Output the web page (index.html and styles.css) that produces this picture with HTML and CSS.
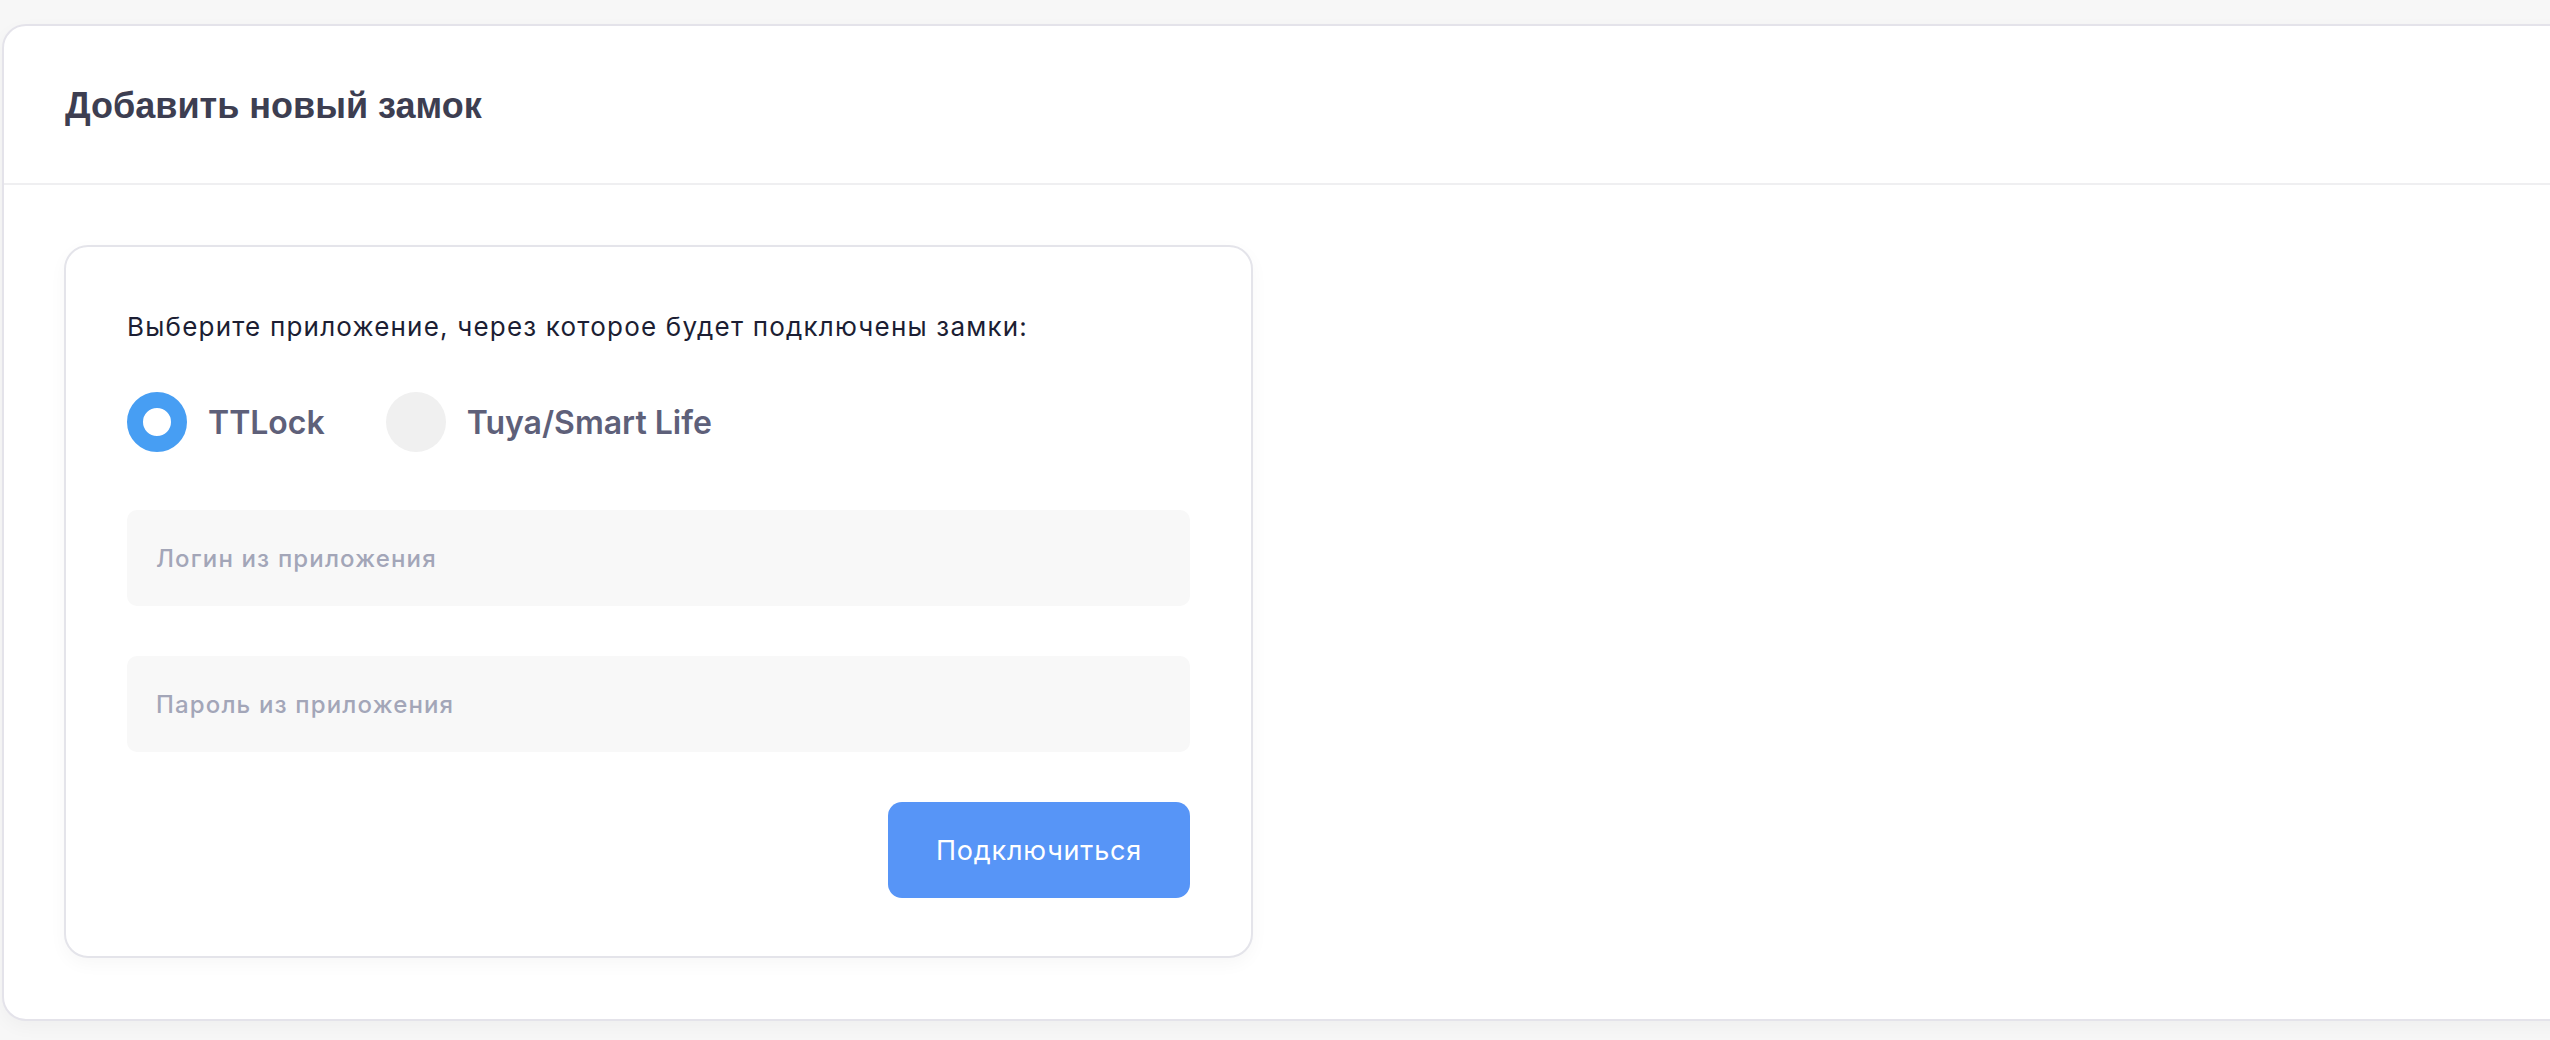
FILE: index.html
```html
<!DOCTYPE html>
<html lang="ru">
<head>
<meta charset="utf-8">
<title>Добавить новый замок</title>
<link rel="stylesheet" href="styles.css">
</head>
<body>
<div class="page">
  <section class="panel">
    <header class="panel-head">
      <h1 class="panel-title">Добавить новый замок</h1>
    </header>
    <div class="panel-body">
      <form class="connect-card">
        <p class="connect-label">Выберите приложение, через которое будет подключены замки:</p>
        <div class="radio-row">
          <label class="radio">
            <span class="radio-dot radio-dot--on"></span>
            <span class="radio-text">TTLock</span>
          </label>
          <label class="radio">
            <span class="radio-dot"></span>
            <span class="radio-text">Tuya/Smart Life</span>
          </label>
        </div>
        <input class="field field--first" type="text" placeholder="Логин из приложения">
        <input class="field" type="password" placeholder="Пароль из приложения">
        <div class="actions">
          <button class="btn-primary" type="button">Подключиться</button>
        </div>
      </form>
    </div>
  </section>
</div>
</body>
</html>
```

FILE: styles.css
```css
html, body {
  margin: 0;
  padding: 0;
  background: #f7f7f7;
  overflow: hidden;
}

body {
  font-family: Inter, "Noto Sans", "Liberation Sans", sans-serif;
  width: 2550px;
  height: 1040px;
}

.page {
  padding: 24px 0 0 2px;
}

.panel {
  margin-right: -40px;
  height: 997px;
  box-sizing: border-box;
  background: #ffffff;
  border: 2px solid #e4e3ea;
  border-radius: 24px;
  box-shadow: 0 6px 18px rgba(0, 0, 0, 0.035);
  display: flex;
  flex-direction: column;
}

.panel-head {
  height: 157px;
  border-bottom: 2px solid #efeff1;
  display: flex;
  align-items: center;
  padding: 0 61px;
}

.panel-title {
  margin: 0;
  font-family: "Liberation Sans", Arial, sans-serif;
  font-weight: 700;
  font-size: 36px;
  color: #3d3e51;
  position: relative;
  top: 1px;
}

.panel-body {
  padding: 60px 60px 0 60px;
}

.connect-card {
  width: 1189px;
  box-sizing: border-box;
  border: 2px solid #e4e4ea;
  border-radius: 24px;
  background: #ffffff;
  box-shadow: 0 6px 18px rgba(0, 0, 0, 0.035);
  padding: 60px 61px 58px 61px;
  display: flex;
  flex-direction: column;
  margin: 0;
}

.connect-label {
  margin: 0;
  font-size: 26px;
  line-height: 39px;
  color: #1c1e33;
  font-weight: 400;
  letter-spacing: 1.2px;
}

.radio-row {
  margin-top: 46px;
  display: flex;
  align-items: center;
  gap: 61px;
  height: 60px;
}

.radio {
  display: flex;
  align-items: center;
  gap: 21px;
}

.radio-dot {
  width: 60px;
  height: 60px;
  border-radius: 50%;
  background: #f0f0f0;
  box-sizing: border-box;
}

.radio-dot--on {
  background: #ffffff;
  border: 16px solid #479ef3;
}

.radio-text {
  font-size: 32px;
  font-weight: 600;
  color: #5e6079;
}

.field {
  display: block;
  width: 100%;
  height: 96px;
  box-sizing: border-box;
  margin-top: 50px;
  border: none;
  outline: none;
  border-radius: 10px;
  background: #f8f8f8;
  padding: 0 29px;
  font-family: Inter, "Noto Sans", sans-serif;
  font-size: 24px;
  font-weight: 500;
  letter-spacing: 1.15px;
  color: #1c1e33;
}

.field--first {
  margin-top: 58px;
}

.field::placeholder {
  color: #a3a6b8;
  font-weight: 500;
}

.actions {
  margin-top: 50px;
  display: flex;
  justify-content: flex-end;
}

.btn-primary {
  width: 302px;
  height: 96px;
  border: none;
  border-radius: 14px;
  background: #5795f7;
  color: #ffffff;
  font-family: Inter, "Noto Sans", sans-serif;
  font-size: 27px;
  font-weight: 400;
  letter-spacing: 0.8px;
  cursor: pointer;
}
```
